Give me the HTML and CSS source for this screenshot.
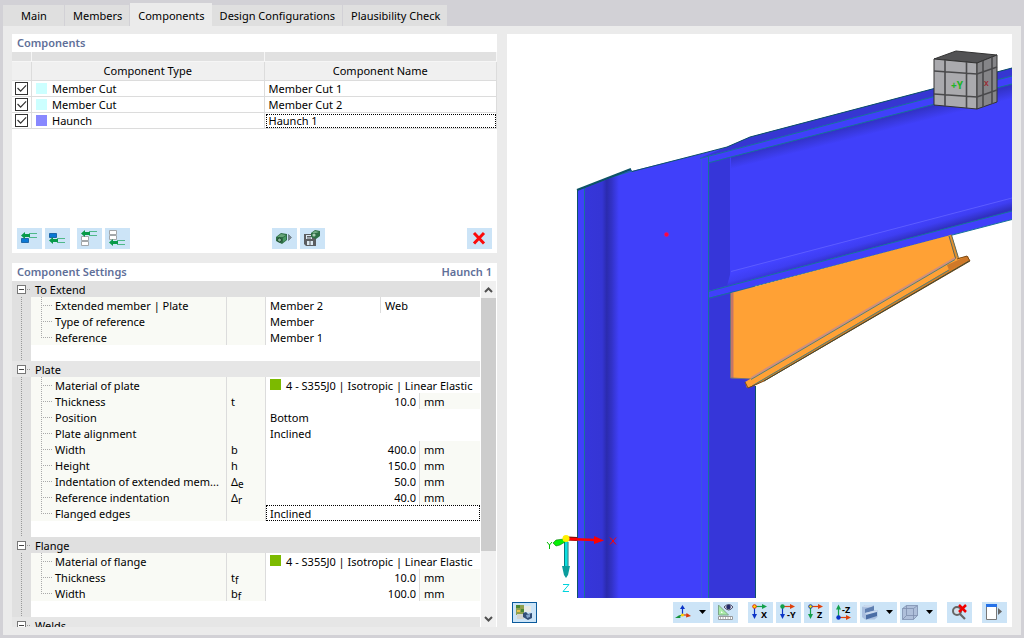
FILE: index.html
```html
<!DOCTYPE html>
<html lang="en">
<head>
<meta charset="utf-8">
<title>Components</title>
<link rel="stylesheet" href="styles.css">
</head>
<body>
<div class="dialog">
  <nav class="tabs" role="tablist">
    <button class="tab tab-first" role="tab">Main</button>
    <button class="tab" role="tab">Members</button>
    <button class="tab tab-active" role="tab" aria-selected="true">Components</button>
    <button class="tab" role="tab">Design Configurations</button>
    <button class="tab" role="tab">Plausibility Check</button>
  </nav>
  <main class="content">
    <div class="side">
      <section class="panel components">
        <h2 class="title">Components</h2>
        <table class="list">
          <colgroup><col class="c-check"><col><col></colgroup>
          <thead>
            <tr class="strip"><td></td><td></td><td></td></tr>
            <tr><th></th><th>Component Type</th><th>Component Name</th></tr>
          </thead>
          <tbody>
            <tr><td class="check"><input type="checkbox" checked aria-label="Member Cut 1"></td><td><span class="type"><i class="swatch cyan"></i>Member Cut</span></td><td>Member Cut 1</td></tr>
            <tr><td class="check"><input type="checkbox" checked aria-label="Member Cut 2"></td><td><span class="type"><i class="swatch cyan"></i>Member Cut</span></td><td>Member Cut 2</td></tr>
            <tr><td class="check"><input type="checkbox" checked aria-label="Haunch 1"></td><td><span class="type"><i class="swatch violet"></i>Haunch</span></td><td class="focus">Haunch 1</td></tr>
          </tbody>
        </table>
        <div class="toolbar">
          <div class="group">
            <button class="tool" aria-label="Insert before"><svg viewBox="0 0 25 21"><path d="M4.500 10.500h7v4h-7z" fill="#0a78d4" stroke="#07549a" stroke-width=".8"/><path d="M12 5.500h8M12 9.500h8" stroke="#4fb98a"/><path d="M4 7.500l4-3.500v2h5v3H8v2z" fill="#079a48"/></svg></button>
            <button class="tool" aria-label="Insert after"><svg viewBox="0 0 25 21"><path d="M4.500 5.500h7v4h-7z" fill="#0a78d4" stroke="#07549a" stroke-width=".8"/><path d="M12 10.500h8M12 14.500h8" stroke="#4fb98a"/><path d="M4 12.500l4-3.500v2h5v3H8v2z" fill="#079a48"/></svg></button>
          </div>
          <div class="group">
            <button class="tool" aria-label="Move to top"><svg viewBox="0 0 25 21"><path d="M4.500 8.500h7v4h-7zM4.500 13.500h7v4h-7z" fill="#fff" stroke="#a3a7aa"/><path d="M12 3.500h8M12 7.500h8" stroke="#4fb98a"/><path d="M4 5.500L8 2v2h5v3H8v2z" fill="#079a48"/></svg></button>
            <button class="tool" aria-label="Move to bottom"><svg viewBox="0 0 25 21"><path d="M4.500 2.500h7v4h-7zM4.500 7.500h7v4h-7z" fill="#fff" stroke="#a3a7aa"/><path d="M12 12.500h8M12 16.500h8" stroke="#4fb98a"/><path d="M4 14.500L8 11v2h5v3H8v2z" fill="#079a48"/></svg></button>
          </div>
          <div class="group center">
            <button class="tool" aria-label="Load component"><svg viewBox="0 0 25 21"><path d="M4 9l5-4 6 1v6l-5 4-6-3z" fill="#2d6e45"/><path d="M5 9l4-3 5 1-3 2z" fill="#68a57a"/><circle cx="7.500" cy="12" r="2" fill="#86b596" stroke="#204c32"/><path d="M11 10l3-2v4l-3 2z" fill="#4a9966"/><path d="M16.500 6.500l3 3-3 3z" fill="#7a8790" stroke="#596771" stroke-width=".6"/></svg></button>
            <button class="tool" aria-label="Save component"><svg viewBox="0 0 25 21"><path d="M4 6h9v4h3v8H6l-2-2z" fill="#5b5d60"/><path d="M6 7h6v4H6zM7 13h6v4H7z" fill="#dce9f2"/><path d="M7 8.500h4M7 10h4M10 13v4" stroke="#5b5d60"/><path d="M11 5l4-3 5 1v5l-4 3-5-2z" fill="#2d6e45"/><path d="M12 5l3-2 4 1-3 1z" fill="#75ad86"/><circle cx="14" cy="7" r="1.600" fill="#a7cdb4"/></svg></button>
          </div>
          <button class="tool" aria-label="Delete"><svg viewBox="0 0 25 21"><path d="M7 5L17 15.500M17 5L7 15.500" stroke="#fb0b0b" stroke-width="3"/></svg></button>
        </div>
      </section>

      <section class="panel settings">
        <h2 class="title">Component Settings<span>Haunch 1</span></h2>
        <div class="scroller">
          <div class="clip">
          <table class="props">
            <colgroup><col class="c-gutter"><col class="c-name"><col class="c-symbol"><col><col class="c-extra"><col class="c-unit"></colgroup>
            <tbody>
              <tr class="head"><td class="node"><button class="fold" aria-label="Collapse To Extend"></button></td><th colspan="5">To Extend</th></tr>
              <tr><td class="gutter"></td><td class="name">Extended member | Plate</td><td class="symbol"></td><td>Member 2</td><td class="split" colspan="2">Web</td></tr>
              <tr><td class="gutter"></td><td class="name">Type of reference</td><td class="symbol"></td><td colspan="3">Member</td></tr>
              <tr><td class="gutter"></td><td class="name last">Reference</td><td class="symbol"></td><td colspan="3">Member 1</td></tr>
              <tr><td class="gutter"></td><td colspan="5"></td></tr>
            </tbody>
            <tbody>
              <tr class="head light"><td class="node"><button class="fold" aria-label="Collapse Plate"></button></td><th colspan="5">Plate</th></tr>
              <tr><td class="gutter"></td><td class="name">Material of plate</td><td class="symbol"></td><td colspan="3"><span class="material"><i class="swatch green"></i>4 - S355J0 | Isotropic | Linear Elastic</span></td></tr>
              <tr><td class="gutter"></td><td class="name">Thickness</td><td class="symbol">t</td><td class="num" colspan="2">10.0</td><td class="unit">mm</td></tr>
              <tr><td class="gutter"></td><td class="name">Position</td><td class="symbol"></td><td colspan="3">Bottom</td></tr>
              <tr><td class="gutter"></td><td class="name">Plate alignment</td><td class="symbol"></td><td colspan="3">Inclined</td></tr>
              <tr><td class="gutter"></td><td class="name">Width</td><td class="symbol">b</td><td class="num" colspan="2">400.0</td><td class="unit">mm</td></tr>
              <tr><td class="gutter"></td><td class="name">Height</td><td class="symbol">h</td><td class="num" colspan="2">150.0</td><td class="unit">mm</td></tr>
              <tr><td class="gutter"></td><td class="name">Indentation of extended mem...</td><td class="symbol">Δ<sub>e</sub></td><td class="num" colspan="2">50.0</td><td class="unit">mm</td></tr>
              <tr><td class="gutter"></td><td class="name">Reference indentation</td><td class="symbol">Δ<sub>r</sub></td><td class="num" colspan="2">40.0</td><td class="unit">mm</td></tr>
              <tr><td class="gutter"></td><td class="name last">Flanged edges</td><td class="symbol"></td><td class="focus" colspan="3">Inclined</td></tr>
              <tr><td class="gutter"></td><td colspan="5"></td></tr>
            </tbody>
            <tbody>
              <tr class="head"><td class="node"><button class="fold" aria-label="Collapse Flange"></button></td><th colspan="5">Flange</th></tr>
              <tr><td class="gutter"></td><td class="name">Material of flange</td><td class="symbol"></td><td colspan="3"><span class="material"><i class="swatch green"></i>4 - S355J0 | Isotropic | Linear Elastic</span></td></tr>
              <tr><td class="gutter"></td><td class="name">Thickness</td><td class="symbol">t<sub>f</sub></td><td class="num" colspan="2">10.0</td><td class="unit">mm</td></tr>
              <tr><td class="gutter"></td><td class="name last">Width</td><td class="symbol">b<sub>f</sub></td><td class="num" colspan="2">100.0</td><td class="unit">mm</td></tr>
              <tr><td class="gutter"></td><td colspan="5"></td></tr>
            </tbody>
            <tbody>
              <tr class="head light"><td class="node"><button class="fold" aria-label="Collapse Welds"></button></td><th colspan="5">Welds</th></tr>
            </tbody>
          </table>
          </div>
          <div class="scrollbar">
            <button class="arrow" aria-label="Scroll up"><svg viewBox="0 0 15 17"><path d="M4 11l3.500-3.500L11 11" fill="none" stroke="#505050" stroke-width="2"/></svg></button>
            <div class="track"><div class="thumb"></div></div>
            <button class="arrow" aria-label="Scroll down"><svg viewBox="0 0 15 17"><path d="M4 7l3.500 3.500L11 7" fill="none" stroke="#505050" stroke-width="2"/></svg></button>
          </div>
        </div>
      </section>
    </div>

    <section class="panel viewer">
      <svg class="scene" viewBox="507 34 505 564" preserveAspectRatio="xMaxYMax slice" role="img" aria-label="3D model of the joint">
        <defs>
          <linearGradient id="web" gradientUnits="userSpaceOnUse" x1="585" y1="0" x2="619" y2="0"><stop offset="0" stop-color="#3636da"/><stop offset=".5" stop-color="#3535d5"/><stop offset=".64" stop-color="#2b2bae"/><stop offset=".78" stop-color="#3232c6"/><stop offset="1" stop-color="#4040fa"/></linearGradient>
          <linearGradient id="under" gradientUnits="userSpaceOnUse" x1="860" y1="124" x2="863" y2="136"><stop offset="0" stop-color="#3232c6"/><stop offset="1" stop-color="#4040fa"/></linearGradient>
          <linearGradient id="over" gradientUnits="userSpaceOnUse" x1="860" y1="237" x2="864" y2="251"><stop offset="0" stop-color="#4343ff"/><stop offset=".5" stop-color="#3e3ef2"/><stop offset="1" stop-color="#3030c0"/></linearGradient>
        </defs>
        <path d="M577 190L630 169l2 2L700 154l27-7 23-10L1012 68v151.500L755 286v312H577z" fill="#4040fa"/>
        <path d="M585 188L613 177l6-3v424h-34z" fill="url(#web)"/>
        <path d="M708 163v128l22-6V157zM708 298v300h47V286z" fill="#3636d9"/>
        <path d="M727 147l23-10L1012 68v8L700 158z" fill="#3636d2"/>
        <path d="M731 157L1012 84v19L731 176z" fill="url(#under)"/>
        <path d="M731 271L1012 198v13L727 286z" fill="url(#over)"/>
        <path d="M731 271.500L1012 198" stroke="#5c5cff"/>
        <path d="M701.500 158v440" stroke="#3a55e0"/>
        <g fill="none" stroke="#17739a"><path d="M584.500 187v411M708.500 156v442M700 158.500L1012 76M708 163L1012 84M708 291.500L1012 211M708 298.500L1012 219.500M612 177l20-6"/></g>
        <path d="M577.500 598V190L630 169.500l2 2L700 154l27-7 23-10L1012 68M755.500 386v212" fill="none" stroke="#0d5366"/>
        <path d="M577 190L631 169" stroke="#0d5366" stroke-width="2"/>
        <path d="M731 293L949 235.500l2-.5 6 24L751 379l-20-1z" fill="#ffa135"/>
        <path d="M732 293v85" stroke="#c57668" stroke-width="3"/>
        <path d="M730.500 293v85l21 1" fill="none" stroke="#6f7180"/>
        <path d="M949 235.500l2.500-1 7 23-3 2z" fill="#e0902f"/>
        <path d="M949 236l7 24M951.500 235l7 23" stroke="#5a685e" fill="none"/>
        <path d="M745 382L957 258l11-2 2 5L764 381l-17 7z" fill="#ffa135"/>
        <path d="M756 385L969 261l-21 9L750 387z" fill="#d57d25"/>
        <path d="M947 265l20-9 3 5-21 9z" fill="#cf7929"/>
        <path d="M751 378L955 258" stroke="#cf8f80" stroke-width="2"/>
        <path d="M751 379.500L955 259.500M752 386L949 270" stroke="#4e807c" fill="none"/>
        <path d="M745 382l3 6 16-7L970 261l-3-5-10 3" fill="none" stroke="#754817"/>
        <path d="M764 381L969 261" stroke="#3f4a35"/>
        <circle cx="666.500" cy="234.500" r="2.200" fill="#ff063b" stroke="#a326b8" stroke-width=".6"/>
        <g stroke="#333" stroke-linejoin="round">
          <path d="M934 59l22-8 41 4-20 8z" fill="#525254"/>
          <path d="M934 59l43 4v46l-43-4z" fill="#aaaaae"/>
          <path d="M977 63l20-8v47l-20 7z" fill="#858588"/>
        </g>
        <path d="M934 71l43 3 20-7M934 94l43 3 20-7M945 60v46M966.500 62v46M983 61v46M992 57v47" fill="none" stroke="#49494b" stroke-width="1.600"/>
        <text class="mark" x="951" y="89" fill="#20b526">+Y</text>
        <text class="mark small" x="984" y="86" fill="#9a2b32">X</text>
        <path d="M568 538.500l9 .5" stroke="#80130c" stroke-width="4"/>
        <path d="M568 539l27 1" stroke="#f00" stroke-width="2.500"/><path d="M594 536l10 4.500-10 3.500z" fill="#f00"/>
        <path d="M566 540v29" stroke="#0be0e0" stroke-width="3.500"/><path d="M564.500 542v26M568 542v26" stroke="#087a80"/><path d="M562 566h8l-2 9-2 3-2-3z" fill="#0b9d9d"/>
        <path d="M564 539l-8 1-3 3 3 3 4-1 5-3z" fill="#06f006" stroke="#087b08" stroke-width=".6"/>
        <circle cx="566" cy="538.500" r="3.500" fill="#fff000"/>
        <path d="M610 537.500l6 7M616 537.500l-6 7" stroke="#f00"/><path d="M563 584.500h6l-6 7h6" fill="none" stroke="#00d4dc"/><path d="M547 542l2.500 3 2.500-3M549.500 545v4" stroke="#0b0" fill="none"/>
      </svg>
      <div class="toolbar viewbar">
        <button class="tool pressed" aria-label="Render mode"><svg viewBox="0 0 25 21"><path d="M4 3h8v10H4z" fill="#8fa04f"/><path d="M4 3h4v3H4zM9 7h5v3H9z" fill="#4e8734"/><path d="M5 8h3v2H5z" fill="#e5c24e"/><path d="M12 4h7v6h-7z" fill="#e8e9e4"/><path d="M5 12h7v5H5z" fill="#d3d5d1"/><path d="M11 11l3-1 2 2 4-1v5l-4 2-5-3z" fill="#334f78"/><path d="M14 13l4-1v3l-3 1z" fill="#83a4cc"/></svg></button>
        <button class="tool wide push" aria-label="Coordinate system"><svg viewBox="0 0 37 21"><path d="M9.500 13V6" stroke="#0b34c7" stroke-width="1.200"/><path d="M7 7l2.500-4L12 7z" fill="#0b34c7"/><path d="M9 13l-3 1.500" stroke="#15923b" stroke-width="1.200"/><path d="M2 16l4.500-3 1 3z" fill="#15923b"/><path d="M10 13h5" stroke="#d83a0b" stroke-width="1.200"/><path d="M13.500 11l4.500 3-5 1.500z" fill="#d83a0b"/><circle cx="9.500" cy="13" r="1.600" fill="#ffd10a"/><path d="M26 8h7l-3.500 4z"/></svg></button>
        <button class="tool" aria-label="Measure"><svg viewBox="0 0 25 21"><path d="M5.500 3v10h10z" fill="#a8eaa7" stroke="#7da688"/><path d="M8 9v2h2z" fill="#fff"/><path d="M5.500 14.500h14v3h-14z" fill="#fff" stroke="#96999c"/><path d="M7.500 15v2M10 15v2M12.500 15v2M15 15v2M17.500 15v2" stroke="#96999c" stroke-width=".7"/><path d="M11 5q5-5 9 0-4 6-9 0z" fill="#e3e4ef" stroke="#4b4d68"/><circle cx="15.500" cy="5" r="2.300" fill="#242b67"/></svg></button>
        <button class="tool gap" aria-label="View in X"><svg viewBox="0 0 25 21"><path d="M7 4.500h9" stroke="#13a04b" stroke-width="1.200"/><path d="M14 2l5 2.500L14 7z" fill="#13a04b"/><path d="M6.500 5v8" stroke="#0b34c7" stroke-width="1.200"/><path d="M4 12l2.500 5L9 12z" fill="#0b34c7"/><circle cx="6.500" cy="4.500" r="1.800" fill="#ffe000" stroke="#e22b13"/><text class="axis" x="13" y="16">X</text></svg></button>
        <button class="tool" aria-label="View in -Y"><svg viewBox="0 0 25 21"><path d="M7 4.500h9" stroke="#df410d" stroke-width="1.200"/><path d="M14 2l5 2.500L14 7z" fill="#df410d"/><path d="M6.500 5v8" stroke="#0b34c7" stroke-width="1.200"/><path d="M4 12l2.500 5L9 12z" fill="#0b34c7"/><circle cx="6.500" cy="4.500" r="2.200" fill="#13a04b"/><text class="axis" x="11" y="16">-Y</text></svg></button>
        <button class="tool" aria-label="View in Z"><svg viewBox="0 0 25 21"><path d="M7 4.500h9" stroke="#df410d" stroke-width="1.200"/><path d="M14 2l5 2.500L14 7z" fill="#df410d"/><path d="M6.500 5v8" stroke="#13a04b" stroke-width="1.200"/><path d="M4 12l2.500 5L9 12z" fill="#13a04b"/><circle cx="6.500" cy="4.500" r="1.800" fill="#ffe000" stroke="#1b3ab0"/><text class="axis" x="13" y="16">Z</text></svg></button>
        <button class="tool" aria-label="View in -Z"><svg viewBox="0 0 25 21"><path d="M7 15.500h9" stroke="#df410d" stroke-width="1.200"/><path d="M14 13l5 2.500-5 2.500z" fill="#df410d"/><path d="M6.500 6v9" stroke="#13a04b" stroke-width="1.200"/><path d="M4 7.500l2.500-5L9 7.500z" fill="#13a04b"/><circle cx="6.500" cy="15.500" r="2.200" fill="#0b34c7"/><text class="axis" x="10" y="11">-Z</text></svg></button>
        <button class="tool wide" aria-label="Display style"><svg viewBox="0 0 37 21"><path d="M2 5l3-2h9v5h3.500v7l-3 2.500H5L2 15z" fill="#a9bfdf"/><path d="M2 5l3-2h9l-3 2.500z" fill="#c9d9ee"/><path d="M5 7l9-3v4.500L5 11z" fill="#5f7fb1"/><path d="M5 11l12-3v2l-10 3z" fill="#c9d9ee"/><path d="M6 13l11-3v4l-11 3.500z" fill="#4b6ea5"/><path d="M26 8h7l-3.500 4z"/></svg></button>
        <button class="tool wide" aria-label="Transparency"><svg viewBox="0 0 37 21"><path d="M2.500 6.500l4-3h11v10l-4 4h-11z" fill="#aebfda" stroke="#7d8fae" stroke-width=".8"/><path d="M2.500 6.500h11v11M13.500 6.500l4-3M6.500 3.500v10h11M6.500 13.500l-4 4" fill="none" stroke="#7d8fae" stroke-width=".8"/><path d="M26 8h7l-3.500 4z"/></svg></button>
        <button class="tool gap" aria-label="Reset zoom"><svg viewBox="0 0 25 21"><circle cx="10" cy="9" r="4" fill="#d4e1eb" stroke="#666" stroke-width="2"/><path d="M13 12l5 5" stroke="#666" stroke-width="2.200"/><path d="M12 3l7 7M19 3l-7 7" stroke="#f00000" stroke-width="2.500"/></svg></button>
        <button class="tool gap" aria-label="Panel"><svg viewBox="0 0 25 21"><path d="M4.500 3.500h10v14h-10z" fill="#fff" stroke="#777"/><path d="M4 2h11v3H4z" fill="#2672e8"/><path d="M16 6l4 3.500-4 3.500z" fill="#666"/></svg></button>
      </div>
    </section>
  </main>
</div>
</body>
</html>
```
FILE: styles.css
```css
* { box-sizing: border-box; }

body {
  margin: 0;
  background: #d2d1d6;
  color: #000;
  font: 11px/16px "Noto Sans", "Open Sans", sans-serif;
}

button {
  margin: 0;
  padding: 0;
  border: 0;
  font: inherit;
  color: inherit;
}

svg { display: block; }

.dialog {
  display: flex;
  flex-direction: column;
  height: 100vh;
  padding: 3px;
}

.tabs {
  display: flex;
  align-items: flex-end;
}

.tab {
  height: 21px;
  padding: 0 7px 0 8px;
  background: #dfdfdf;
  border-right: 1px solid #d2d1d6;
}

.tab-first { min-width: 62px; }

.tab-active {
  height: 23px;
  padding-top: 2px;
  background: #ebebeb;
}

.tab-active, .tab:last-child { border-right: 0; }

.content {
  flex: 1;
  min-height: 0;
  display: grid;
  grid-template-columns: 485fr 505fr;
  gap: 10px;
  padding: 8px 9px;
  background: #ebebeb;
}

.side {
  display: grid;
  grid-template-rows: 219fr 364fr;
  gap: 10px;
  min-height: 0;
}

.panel {
  display: flex;
  flex-direction: column;
  min-width: 0;
  min-height: 0;
  background: #fff;
}

.title {
  display: flex;
  justify-content: space-between;
  margin: 0;
  padding: 0 5px;
  color: #5f6f99;
  font-size: 11px;
  font-weight: 600;
  line-height: 18px;
}

table {
  width: 100%;
  table-layout: fixed;
  border-collapse: separate;
  border-spacing: 0;
}

td, th {
  height: 16px;
  padding: 0 4px;
  font-weight: 400;
  line-height: 15px;
  text-align: left;
  white-space: nowrap;
}

.c-check { width: 20px; }

.list td, .list th {
  border-right: 1px solid #dcdcdc;
  border-bottom: 1px solid #dcdcdc;
}

.list th {
  height: 19px;
  padding-bottom: 2px;
  background: #f0f0f0;
  text-align: center;
}

.list .strip td {
  height: 10px;
  background: #e1e1e1;
  border-color: #f6f6f6;
}

.list .check { padding: 0 3px; }

.check input {
  appearance: none;
  display: block;
  width: 13px;
  height: 13px;
  margin: 0;
  border: 1px solid #333;
  background: #fff;
}

.check input:checked::before {
  content: "";
  display: block;
  height: 11px;
  background: #333;
  clip-path: polygon(10% 50%, 18% 42%, 42% 65%, 88% 18%, 96% 26%, 42% 82%);
}

.type, .material {
  display: flex;
  align-items: center;
  gap: 5px;
}

.material { align-items: flex-start; }

.swatch {
  width: 11px;
  height: 11px;
}

.cyan { background: #ccffff; }
.violet { background: #8888ff; }
.green { background: #7cba00; }

.focus {
  outline: 1px dotted #000;
  outline-offset: -1px;
}

.list .focus { outline-offset: -2px; }

.toolbar {
  display: flex;
  gap: 7px;
  margin-top: auto;
  padding: 4px 5px;
}

.group {
  display: flex;
  gap: 3px;
}

.center { margin: 0 auto; }

.tool {
  width: 25px;
  height: 21px;
  background: #cce4f7;
}

.wide { width: 37px; }

.pressed { outline: 1px solid #0a5a9c; outline-offset: -1px; }

.scroller {
  flex: 1;
  display: flex;
  gap: 1px;
  min-height: 0;
  padding-right: 1px;
}

.clip {
  flex: 1;
  min-width: 0;
  overflow: hidden;
}

.props td, .props th {
  padding-top: 2px;
  line-height: 14px;
}

.c-gutter { width: 19px; }
.c-name { width: 196px; }
.c-symbol { width: 39px; }
.c-extra { width: 39px; }
.c-unit { width: 61px; }

.head { background: #e0e0e0; }
.light { background: #e6e6e6; }

.props .node {
  padding: 0 5px;
  background: repeating-linear-gradient(90deg, #999 0 1px, transparent 1px 2px) 15px 8px / 4px 1px no-repeat;
}

.fold {
  display: block;
  width: 9px;
  height: 9px;
  border: 1px solid #777;
  background: linear-gradient(#444, #444) center / 5px 1px no-repeat #fff;
}

.gutter {
  background: repeating-linear-gradient(#999 0 1px, transparent 1px 2px) 9px 0 / 1px 16px no-repeat #e0e0e0;
}

.props .name {
  padding-left: 24px;
  border-right: 1px solid #dcdcdc;
  background:
    repeating-linear-gradient(#aaa 0 1px, transparent 1px 2px) 10px 0 / 1px 16px no-repeat,
    repeating-linear-gradient(90deg, #aaa 0 1px, transparent 1px 2px) 10px 8px / 11px 1px no-repeat,
    #f9faf5;
}

.props .last {
  background-size: 1px 8px, 11px 1px, auto;
}

.symbol {
  border-right: 1px solid #dcdcdc;
  background: #f9faf5;
}

.symbol sub {
  font-size: 10px;
  line-height: 0;
  vertical-align: -2px;
}

.split { border-left: 1px solid #dcdcdc; }

.props .num {
  padding-right: 3px;
  text-align: right;
}

.unit {
  border-left: 1px solid #dcdcdc;
  background: #f9faf5;
}

.scrollbar {
  display: flex;
  flex-direction: column;
  width: 15px;
  background: #f0f0f0;
}

.arrow {
  height: 17px;
  background: #f0f0f0;
}

.track { flex: 1; }

.thumb {
  height: 81%;
  background: #cdcdcd;
}

.scene {
  flex: 1;
  width: 100%;
  min-height: 0;
}

.viewbar {
  gap: 3px;
  margin-top: 0;
}

.push { margin-left: auto; }
.gap { margin-left: 7px; }

.mark { font: 700 10px "Noto Sans", sans-serif; }
.small { font-size: 7px; }
.axis { font: 700 9px "Noto Sans", sans-serif; }
```
